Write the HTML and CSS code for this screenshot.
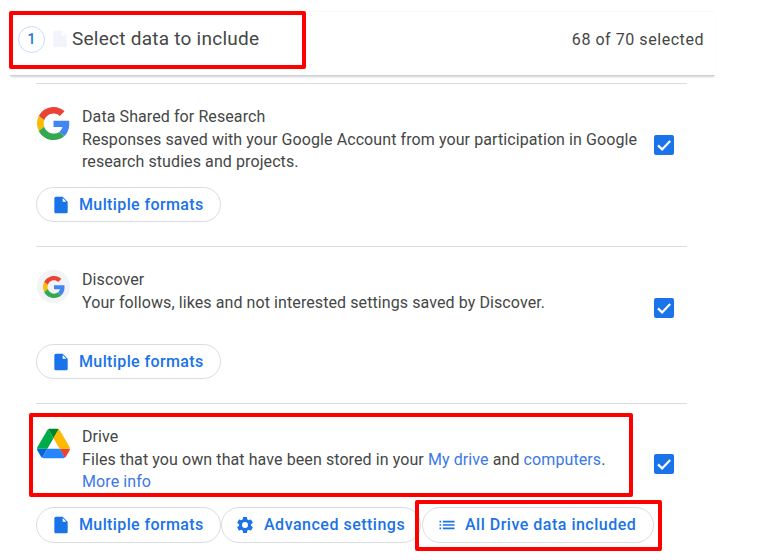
FILE: index.html
```html
<!DOCTYPE html>
<html lang="en">
<head>
<meta charset="utf-8">
<title>Select data to include</title>
<link rel="stylesheet" href="styles.css">
</head>
<body>
<svg class="defs" aria-hidden="true">
  <symbol id="g-logo" viewBox="0 0 48 48">
    <path fill="#EA4335" d="M24 9.5c3.54 0 6.71 1.22 9.21 3.6l6.85-6.85C35.9 2.38 30.47 0 24 0 14.62 0 6.51 5.38 2.56 13.22l7.98 6.19C12.43 13.72 17.74 9.5 24 9.5z"/>
    <path fill="#4285F4" d="M46.98 24.55c0-1.57-.15-3.09-.38-4.55H24v9.02h12.94c-.58 2.96-2.26 5.48-4.78 7.18l7.73 6c4.51-4.18 7.09-10.36 7.09-17.65z"/>
    <path fill="#FBBC05" d="M10.53 28.59c-.48-1.45-.76-2.99-.76-4.59s.27-3.14.76-4.59l-7.98-6.19C.92 16.46 0 20.12 0 24c0 3.88.92 7.54 2.56 10.78l7.97-6.19z"/>
    <path fill="#34A853" d="M24 48c6.48 0 11.93-2.13 15.89-5.81l-7.73-6c-2.15 1.45-4.92 2.3-8.16 2.3-6.26 0-11.57-4.22-13.47-9.91l-7.98 6.19C6.51 42.62 14.62 48 24 48z"/>
  </symbol>
  <symbol id="doc" viewBox="0 0 24 24">
    <path d="M14 2H6c-1.1 0-2 .9-2 2v16c0 1.1.9 2 2 2h12c1.1 0 2-.9 2-2V8l-6-6zm0 6V3.5L18.5 8H14z"/>
  </symbol>
  <symbol id="check" viewBox="0 0 20 20">
    <rect width="20" height="20" rx="2" fill="#1a73e8"/>
    <path d="M4 10.4l4.1 4L16.2 6" fill="none" stroke="#fff" stroke-width="2.2"/>
  </symbol>
</svg>

<main class="panel">
  <header class="head">
    <div class="head-left">
      <span class="step">1</span>
      <svg class="ghost-doc"><use href="#doc"/></svg>
      <h1 class="head-title">Select data to include</h1>
    </div>
    <span class="count">68 of 70 selected</span>
  </header>

  <section class="list">
    <article class="row row-research">
      <div class="row-main">
        <svg class="logo"><use href="#g-logo"/></svg>
        <div class="text">
          <div>Data Shared for Research</div>
          <div>Responses saved with your Google Account from your participation in Google research studies and projects.</div>
        </div>
        <svg class="box"><use href="#check"/></svg>
      </div>
      <div class="chips">
        <button class="chip"><svg class="chip-icon"><use href="#doc"/></svg>Multiple formats</button>
      </div>
    </article>

    <article class="row row-discover">
      <div class="row-main">
        <span class="logo logo-round"><svg class="logo-small"><use href="#g-logo"/></svg></span>
        <div class="text">
          <div>Discover</div>
          <div>Your follows, likes and not interested settings saved by Discover.</div>
        </div>
        <svg class="box"><use href="#check"/></svg>
      </div>
      <div class="chips">
        <button class="chip"><svg class="chip-icon"><use href="#doc"/></svg>Multiple formats</button>
      </div>
    </article>

    <article class="row row-drive">
      <div class="row-main">
        <svg class="logo" viewBox="0 0 87.3 78">
          <path fill="#0066da" d="m6.6 66.85 3.85 6.65c.8 1.4 1.95 2.5 3.3 3.3l13.75-23.8h-27.5c0 1.55.4 3.1 1.2 4.5z"/>
          <path fill="#00ac47" d="m43.65 25-13.75-23.8c-1.35.8-2.5 1.9-3.3 3.3l-25.4 44a9.06 9.06 0 0 0 -1.2 4.5h27.5z"/>
          <path fill="#ea4335" d="m73.55 76.8c1.35-.8 2.5-1.9 3.3-3.3l1.6-2.75 7.65-13.25c.8-1.4 1.2-2.95 1.2-4.5h-27.502l5.852 11.5z"/>
          <path fill="#00832d" d="m43.65 25 13.75-23.8c-1.35-.8-2.9-1.2-4.5-1.2h-18.5c-1.6 0-3.15.45-4.5 1.2z"/>
          <path fill="#2684fc" d="m59.8 53h-32.3l-13.75 23.8c1.35.8 2.9 1.2 4.5 1.2h50.8c1.6 0 3.15-.45 4.5-1.2z"/>
          <path fill="#ffba00" d="m73.4 26.5-12.7-22c-.8-1.4-1.95-2.5-3.3-3.3l-13.75 23.8 16.15 28h27.45c0-1.55-.4-3.1-1.2-4.5z"/>
        </svg>
        <div class="text">
          <div>Drive</div>
          <div>Files that you own that have been stored in your <a href="#">My drive</a> and <a href="#">computers</a>. <a href="#">More info</a></div>
        </div>
        <svg class="box"><use href="#check"/></svg>
      </div>
      <div class="chips">
        <button class="chip"><svg class="chip-icon"><use href="#doc"/></svg>Multiple formats</button>
        <button class="chip chip-settings">
          <svg class="chip-icon" viewBox="0 0 24 24"><path d="M19.14 12.94c.04-.3.06-.61.06-.94 0-.32-.02-.64-.07-.94l2.03-1.58a.49.49 0 0 0 .12-.61l-1.92-3.32a.49.49 0 0 0-.59-.22l-2.39.96c-.5-.38-1.03-.7-1.62-.94l-.36-2.54a.48.48 0 0 0-.48-.41h-3.84c-.24 0-.43.17-.47.41l-.36 2.54c-.59.24-1.13.57-1.62.94l-2.39-.96c-.22-.08-.47 0-.59.22L2.74 8.87c-.12.21-.08.47.12.61l2.03 1.58c-.05.3-.09.63-.09.94s.02.64.07.94l-2.03 1.58a.49.49 0 0 0-.12.61l1.92 3.32c.12.22.37.29.59.22l2.39-.96c.5.38 1.03.7 1.62.94l.36 2.54c.05.24.24.41.48.41h3.84c.24 0 .44-.17.47-.41l.36-2.54c.59-.24 1.13-.56 1.62-.94l2.39.96c.22.08.47 0 .59-.22l1.92-3.32c.12-.22.07-.47-.12-.61l-2.01-1.58zM12 15.6A3.6 3.6 0 1 1 12 8.4a3.6 3.6 0 0 1 0 7.2z"/></svg>Advanced settings</button>
        <button class="chip chip-data">
          <svg class="chip-icon" viewBox="0 0 24 24"><path d="M3 13h2v-2H3v2zm0 4h2v-2H3v2zm0-8h2V7H3v2zm4 4h14v-2H7v2zm0 4h14v-2H7v2zM7 7v2h14V7H7z"/></svg>All Drive data included</button>
      </div>
    </article>
  </section>
</main>

<div class="mark mark-head"></div>
<div class="mark mark-drive"></div>
<div class="mark mark-chip"></div>
</body>
</html>
```

FILE: styles.css
```css
* { box-sizing: border-box; }

html, body {
  margin: 0;
  height: 560px;
  overflow: hidden;
  background: #fff;
}

body {
  position: relative;
  font-family: Roboto, "Liberation Sans", sans-serif;
  color: #444746;
}

.defs { display: none; }

.panel {
  width: 705px;
  margin: 11px 0 0 10px;
}

.head {
  display: flex;
  justify-content: space-between;
  align-items: center;
  height: 65px;
  padding: 0 11px 9px 8px;
  border-top: 1px solid #f8f9fa;
  border-bottom: 1px solid #cfd1d4;
  box-shadow: 0 2px 2px -1px rgba(60, 64, 67, .25);
}

.head-left {
  display: flex;
  align-items: center;
}

.step {
  display: flex;
  align-items: center;
  justify-content: center;
  width: 27px;
  height: 27px;
  border: 1px solid #c6dafc;
  border-radius: 50%;
  color: #1a73e8;
  font-size: 14px;
  font-weight: 500;
}

.ghost-doc {
  width: 20px;
  height: 20px;
  margin-left: 5px;
  fill: #f1f5fb;
}

.head-title {
  margin: 0 0 0 2px;
  font-size: 19px;
  font-weight: 400;
  line-height: 24px;
  letter-spacing: .25px;
}

.count {
  font-size: 16px;
  letter-spacing: .55px;
}

.list {
  margin: 7px 0 0 26px;
  width: 651px;
}

.row {
  border-top: 1px solid #dadce0;
  padding-top: 21px;
}

.row-research { height: 163px; }
.row-discover { height: 157px; }
.row-drive { height: 157px; }

.row-main {
  display: flex;
  align-items: flex-start;
}

.row-research .row-main { height: 82px; }
.row-discover .row-main { height: 76px; }
.row-drive .row-main { height: 81.5px; }

.logo {
  flex: none;
  width: 33px;
  height: 33px;
  margin: 2px 12px 0 1px;
}

.logo-round {
  display: flex;
  align-items: center;
  justify-content: center;
  border-radius: 50%;
  background: #f1f3f4;
}

.logo-small {
  width: 22px;
  height: 22px;
}

.text {
  width: 556px;
  padding-top: 1px;
  font-size: 16px;
  line-height: 22.5px;
  letter-spacing: .09px;
}

.text a {
  color: #3b78e7;
  text-decoration: none;
}

.box {
  flex: none;
  width: 20px;
  height: 20px;
  margin: 30px 0 0 16px;
}

.row-drive .box { margin-top: 29px; }

.chips { display: flex; }

.chip {
  display: flex;
  align-items: center;
  width: 185px;
  height: 35px;
  padding: 0 0 0 14px;
  border: 1px solid #dadce0;
  border-radius: 18px;
  background: #fff;
  color: #1a73e8;
  font-family: inherit;
  font-size: 16px;
  font-weight: 500;
  letter-spacing: .38px;
  white-space: nowrap;
}

.row-drive .chip { height: 36px; }

.chip-settings {
  width: 200px;
  padding-left: 13px;
  letter-spacing: .5px;
}

.chip-settings .chip-icon { margin-right: 9px; }

.chip-data {
  width: 232px;
  margin-left: 1px;
  letter-spacing: .5px;
}

.chip-icon {
  flex: none;
  width: 20px;
  height: 20px;
  margin-right: 8px;
  fill: #1a73e8;
}

.mark {
  position: absolute;
  border: 4px solid #f00;
  border-radius: 2px;
}

.mark-head { left: 9px; top: 11px; width: 297px; height: 58px; }
.mark-drive { left: 29px; top: 413px; width: 604px; height: 84px; }
.mark-chip { left: 415px; top: 500px; width: 247px; height: 51px; }
```
